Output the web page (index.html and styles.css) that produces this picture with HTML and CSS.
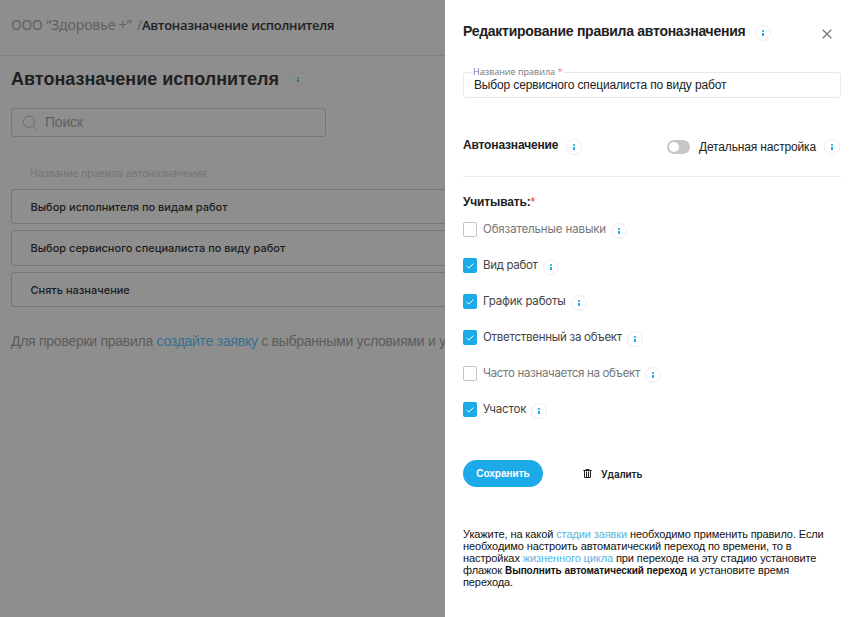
FILE: index.html
```html
<!DOCTYPE html>
<html lang="ru">
<head>
<meta charset="utf-8">
<title>Автоназначение исполнителя</title>
<link rel="stylesheet" href="styles.css">
</head>
<body>
<div class="app">
  <main class="page">
    <header class="crumbs"><span class="crumb-org"><span>ООО “Здоровье +”</span> <span>/</span></span><span class="crumb-current">Автоназначение исполнителя</span></header>
    <div class="page-body">
      <div class="page-head"><h1>Автоназначение исполнителя</h1><span class="info"></span></div>
      <div class="search">
        <svg width="16" height="16" viewBox="0 0 16 16" fill="none" stroke="currentColor"><circle cx="6.8" cy="6.8" r="5.6"/><path d="M10.8 10.8L15 15"/></svg>
        <span>Поиск</span>
      </div>
      <div class="column-name">Название правила автоназначения</div>
      <div class="rows">
        <div class="row"><span>Выбор исполнителя по видам работ</span></div>
        <div class="row row-tall"><span>Выбор сервисного специалиста по виду работ</span></div>
        <div class="row"><span>Снять назначение</span></div>
      </div>
      <p class="hint">Для проверки правила <a>создайте заявку</a> с выбранными условиями и у</p>
    </div>
  </main>
  <aside class="drawer">
    <div class="drawer-head">
      <h2>Редактирование правила автоназначения</h2><span class="info"></span>
      <svg class="close" width="10" height="10" viewBox="0 0 10 10" fill="none" stroke="currentColor" stroke-width="1.3"><path d="M.7.7l8.6 8.6M9.3.7L.7 9.3"/></svg>
    </div>
    <fieldset class="field"><legend>Название правила <i>*</i></legend><span>Выбор сервисного специалиста по виду работ</span></fieldset>
    <div class="auto">
      <h3>Автоназначение</h3><span class="info"></span>
      <span class="toggle"></span><span class="toggle-label">Детальная настройка</span><span class="info"></span>
    </div>
    <h3 class="consider">Учитывать:<i>*</i></h3>
    <div class="options">
      <div class="option off"><span class="box"></span><span class="label o1">Обязательные навыки</span><span class="info"></span></div>
      <div class="option"><span class="box"><svg width="8" height="6" viewBox="0 0 8 6"><path d="M.6 2.8l2.2 2.3L7.4.6"/></svg></span><span class="label o2">Вид работ</span><span class="info"></span></div>
      <div class="option"><span class="box"><svg width="8" height="6" viewBox="0 0 8 6"><path d="M.6 2.8l2.2 2.3L7.4.6"/></svg></span><span class="label o3">График работы</span><span class="info"></span></div>
      <div class="option"><span class="box"><svg width="8" height="6" viewBox="0 0 8 6"><path d="M.6 2.8l2.2 2.3L7.4.6"/></svg></span><span class="label o4">Ответственный за объект</span><span class="info"></span></div>
      <div class="option off"><span class="box"></span><span class="label o5">Часто назначается на объект</span><span class="info"></span></div>
      <div class="option"><span class="box"><svg width="8" height="6" viewBox="0 0 8 6"><path d="M.6 2.8l2.2 2.3L7.4.6"/></svg></span><span class="label o6">Участок</span><span class="info"></span></div>
    </div>
    <div class="actions">
      <div class="save">Сохранить</div>
      <div class="delete"><svg width="9" height="9" viewBox="0 0 9 9" fill="none" stroke="currentColor"><path d="M.3 1.5h8.4M3 1.2V.5h3v.7M1.5 2v6.5h6V2M3.5 2.5V8M5.5 2.5V8"/></svg><span>Удалить</span></div>
    </div>
    <p class="note">
      <span>Укажите, на какой <a>стадии заявки</a> необходимо применить правило. Если</span>
      <span>необходимо настроить автоматический переход по времени, то в</span>
      <span>настройках <a>жизненного цикла</a> при переходе на эту стадию установите</span>
      <span>флажок <b>Выполнить автоматический переход</b> и установите время</span>
      <span>перехода.</span>
    </p>
  </aside>
</div>
</body>
</html>
```
FILE: styles.css
```css
* { box-sizing: border-box; }
body { margin: 0; font-family: "Liberation Sans", Arial, sans-serif; color: #212121; background: #fff; }
h1, h2, h3, p { margin: 0; }
i { font-style: normal; }
.app { display: flex; width: 852px; height: 617px; overflow: hidden; }
.page { width: 445px; background: #8e8e8e; overflow: hidden; white-space: nowrap; }
.crumbs { height: 56px; padding: 15px 0 0 11px; border-bottom: 1px solid #818181; line-height: 20px; display: flex; }
.crumb-org { font: 14px/20px "Noto Sans", sans-serif; letter-spacing: -.1px; color: #606163; width: 131px; display: flex; justify-content: space-between; }
.crumb-current { font: 600 13px/21px "Open Sans", sans-serif; letter-spacing: -.29px; }
.page-body { padding-left: 11px; }
.page-head { display: flex; align-items: center; height: 46px; gap: 11px; }
h1 { font-size: 18px; line-height: 24px; }
.info { width: 16px; height: 16px; flex: none; border: 1px solid #eee; border-radius: 50%; display: flex; align-items: center; justify-content: center; }
.info::before { content: ""; width: 2px; height: 6px; background: linear-gradient(#45b8e6 2px, transparent 2px 3px, #1caae8 3px); }
.page .info { border-color: #888; }
.page .info::before { height: 5px; background: linear-gradient(#3f7d94 2px, #5c8593 2px 3px, #2f6d8a 3px); }
.search { margin-top: 6px; width: 315px; height: 29px; border: 1px solid #777; border-radius: 3px; display: flex; align-items: center; padding-left: 10px; gap: 7px; color: #707070; font-size: 14px; letter-spacing: -.2px; }
.search span { color: #606060; margin-top: -1px; }
.column-name { margin: 29px 0 8px 19px; font: 10.5px/15px "Inter", sans-serif; letter-spacing: -.12px; color: #747474; }
.rows { display: grid; gap: 6px; }
.row { height: 35px; width: 460px; border: 1px solid #757575; border-radius: 3px; display: flex; align-items: center; padding-left: 18.5px; font: 500 11px "Inter", sans-serif; color: #1c1c1c; }
.row-tall { height: 36px; }
.hint { margin-top: 24px; font-size: 14px; line-height: 20px; letter-spacing: -.27px; color: #5c5c5c; }
.hint a { color: #386f8f; }
.drawer { width: 407px; padding: 0 11px 0 18px; background: #fff; white-space: nowrap; }
.drawer-head { display: flex; align-items: center; height: 65px; }
h2 { font-size: 14px; line-height: 20px; margin-top: -3px; letter-spacing: -.27px; }
.drawer-head .info { margin-left: 10px; }
.close { margin-left: auto; margin-right: 9px; margin-top: 2px; color: #777; }
.field { margin: 0; padding: 0 0 0 10px; height: 33px; border: 1px solid #e9e9e9; border-radius: 3px; min-width: 0; }
.field legend { font: 9px/14px "Open Sans", sans-serif; color: #777; padding: 0 2px 0 0; margin-left: -1px; }
.field span { display: block; margin-top: -1px; font-size: 12px; line-height: 14px; letter-spacing: -.15px; }
.consider i { color: #e03a4a; font-weight: 400; }
.field i { color: #e8808a; }
.auto { display: flex; align-items: center; height: 61px; margin-top: 18px; padding: 2px 1px 0 0; border-bottom: 1px solid #ececec; }
h3 { font: 700 12px/16px "Liberation Sans", sans-serif; letter-spacing: -.16px; }
.auto h3 { margin-top: -4px; }
.auto h3 + .info { margin-left: 8px; }
.toggle { margin-left: auto; width: 23px; height: 14px; border-radius: 7px; background: #c6c6c6; padding: 2px; }
.toggle::before { content: ""; display: block; width: 10px; height: 10px; border-radius: 50%; background: #fff; }
.toggle-label { width: 117px; margin: 0 8px 0 9px; font-size: 12px; line-height: 16px; letter-spacing: -.15px; }
.consider { margin-top: 17px; }
.options { margin-top: 10px; }
.option { height: 36px; display: flex; align-items: flex-start; }
.box { width: 14px; height: 15px; margin-top: 2px; border-radius: 2px; background: #1caae8; display: flex; align-items: center; justify-content: center; }
.off .box { background: #fff; border: 1px solid #c4c4c4; }
.box path { fill: none; stroke: #fff; }
.label { margin-left: 6px; font: 11.5px/19px "Inter", sans-serif; color: #444; }
.off .label { color: #777; }
.o1 { letter-spacing: -.13px; }
.o2 { letter-spacing: -.33px; }
.o3 { letter-spacing: -.2px; }
.o4 { letter-spacing: -.26px; }
.o5 { letter-spacing: -.32px; }
.o6 { letter-spacing: -.15px; }
.option .info { margin: 3px 0 0 5px; }
.actions { display: flex; margin-top: 24px; align-items: center; }
.save { width: 80px; height: 27px; border-radius: 14px; background: #1caae8; color: #fff; font: 700 10px/27px "Liberation Sans", sans-serif; text-align: center; }
.delete { display: flex; align-items: center; margin-left: 40px; gap: 9px; font: 600 10px/16px "Inter", sans-serif; letter-spacing: -.1px; }
.note { margin-top: 41px; font-size: 11px; line-height: 12px; letter-spacing: -.1px; color: #111; }
.note span { display: block; }
.note a { color: #5ab4df; }
.note b { font-size: 10px; line-height: 10px; letter-spacing: -.06px; }
```
